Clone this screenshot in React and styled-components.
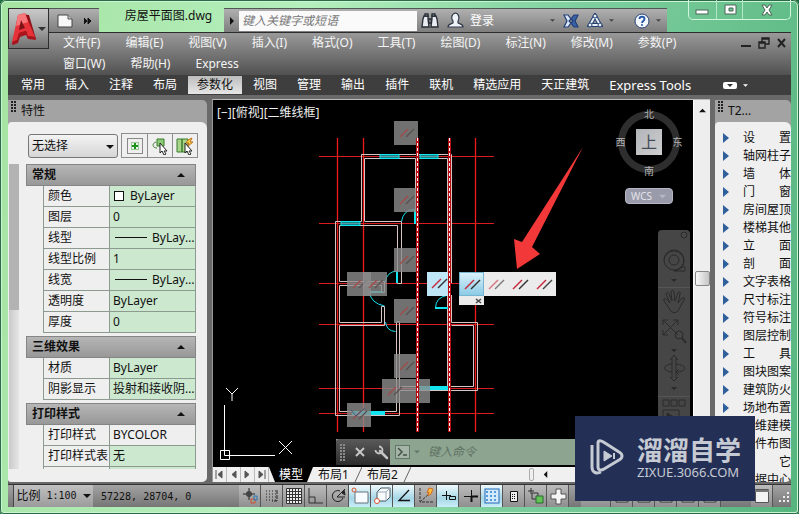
import React from 'react';
import styled, { createGlobalStyle, css } from 'styled-components';

const GlobalStyle = createGlobalStyle`
  * {
    box-sizing: border-box;
  }

  body {
    margin: 0;
    background: #1d6b3c;
    font-family: 'Noto Sans', 'Noto Sans CJK SC', sans-serif;
    font-size: 12px;
    line-height: 16px;
    color: #111;
  }

  button,
  input,
  select {
    font: inherit;
    color: inherit;
    border: 0;
    padding: 0;
    margin: 0;
    background: none;
  }

  ul {
    list-style: none;
    margin: 0;
    padding: 0;
  }

  svg {
    display: block;
    flex: none;
  }
`;

const Window = styled.div`
  position: relative;
  display: flex;
  flex-direction: column;
  height: 100vh;
  padding: 0 8px 7px;
  overflow: hidden;
  border-radius: 6px 6px 4px 4px;
  background: linear-gradient(100deg, #a5e3a2 0, #b4efbd 35%, #7fd0a0 65%, #56b57e 100%);
  box-shadow: inset 0 0 0 1px #2d6b48, inset 0 0 0 2px #c9f5d2;
`;

/* title bar */

const TitleBar = styled.header`
  display: flex;
  align-items: flex-end;
  height: 32px;
  padding-left: 41px;
  flex: none;
`;

const AppButton = styled.button`
  position: absolute;
  z-index: 2;
  left: 8px;
  top: 8px;
  display: flex;
  align-items: center;
  width: 41px;
  height: 41px;
  border: 1px solid #2e2e2e;
  background: linear-gradient(#c9c9c9, #a4a4a4 50%, #707070);
`;

const barGray = css`
  background: linear-gradient(#b0b0b0, #7e7e7e);
  border-top: 1px solid #4f5a52;
`;

const QuickAccess = styled.div`
  ${barGray}
  display: flex;
  align-items: center;
  gap: 10px;
  width: 50px;
  height: 24px;
  padding-left: 8px;
`;

const FileName = styled.div`
  width: 125px;
  height: 24px;
  padding-left: 14px;
  text-align: center;
`;

const InfoBar = styled.div`
  ${barGray}
  display: flex;
  align-items: center;
  flex: 1;
  height: 24px;
  padding-right: 6px;
  color: #fff;
`;

const InfoArrow = styled.button`
  display: flex;
  justify-content: center;
  width: 15px;
`;

const SearchInput = styled.input`
  width: 178px;
  height: 20px;
  padding-left: 3px;
  background: #fafafa;
  font-style: italic;

  &::placeholder {
    color: #777;
  }
`;

const InfoTools = styled.div`
  display: flex;
  align-items: center;
  gap: 8px;
  flex: 1;
  padding-left: 4px;
`;

const IconButton = styled.button`
  display: flex;
  align-items: center;
  justify-content: center;
  gap: 6px;
`;

const HelpButton = styled(IconButton)`
  margin-left: 12px;
`;

const Spacer = styled.span`
  flex: 1;
`;

const WindowControls = styled.div`
  display: flex;
  align-self: flex-start;
  width: 103px;
  height: 20px;
  margin-left: 21px;
  border: 1px solid #d2f5de;
  border-top: 0;
  border-radius: 0 0 5px 5px;
`;

const WindowControl = styled(IconButton)`
  width: ${({ $wide }) => ($wide ? '48px' : '27px')};

  & + & {
    border-left: 1px solid #b5e8c8;
  }
`;

/* menus */

const MenuArea = styled.div`
  display: flex;
  flex: none;
  height: 43px;
  padding-left: 55px;
  padding-right: 5px;
  border-top: 1px solid #2c2c2c;
  background: linear-gradient(#999, #515151);
  color: #f4f4f4;
`;

const Menu = styled.nav`
  display: flex;
  flex-wrap: wrap;
  align-content: flex-start;
  flex: 1;
  gap: 5px 25px;
  padding-top: 2px;
  padding-right: 20px;
`;

const MenuItem = styled.button`
  height: 16px;
`;

const DocControls = styled.div`
  display: flex;
  align-items: center;
  gap: 7px;
  height: 20px;
`;

const Ribbon = styled.nav`
  display: flex;
  align-items: center;
  flex: none;
  gap: 2px;
  height: 20px;
  padding-left: 4px;
  background: #3e3e3e;
  color: #fff;
`;

const RibbonTab = styled.button`
  height: 18px;
  padding: 0 9px;
  ${({ $active }) =>
    $active &&
    css`
      color: #111;
      background: linear-gradient(#bdbdbd, #e6e6e6);
    `}
  ${({ $latin }) =>
    $latin &&
    css`
      font-size: 13px;
    `}
`;

const RibbonToggle = styled(IconButton)`
  margin-left: 21px;
`;

/* work area */

const Body = styled.main`
  display: flex;
  flex: 1;
  min-height: 0;
  gap: 5px;
  padding: 5px 0 2px;
  background: #696969;
`;

const Palette = styled.section`
  display: flex;
  flex-direction: column;
  width: ${({ $width }) => $width};
  flex: none;
  min-height: 0;
  overflow: hidden;
  border-radius: 0 5px 5px 3px;
  background: #a3a3a3;
`;

const PaletteTitle = styled.h2`
  display: flex;
  align-items: center;
  gap: 5px;
  height: 22px;
  margin: 0;
  padding-left: 3px;
  flex: none;
  font-size: 12px;
  font-weight: 400;
`;

const Grip = styled.span`
  width: 5px;
  height: 12px;
  margin-bottom: 8px;
  background: radial-gradient(circle at 1px 1px, #222 1px, transparent 1px) 0 0 / 3px 3px;
`;

const PaletteBody = styled.div`
  display: flex;
  flex-direction: column;
  flex: 1;
  min-height: 0;
  overflow: hidden;
  border-radius: 4px 6px 0 0;
  background: #efefef;
`;

const PickRow = styled.div`
  display: flex;
  align-items: center;
  gap: 3px;
  padding: 11px 9px 6px 20px;
  flex: none;
`;

const SelectBox = styled.div`
  position: relative;
  flex: 1;

  svg {
    position: absolute;
    right: 4px;
    top: 9px;
    pointer-events: none;
  }
`;

const Select = styled.select`
  appearance: none;
  display: block;
  width: 100%;
  height: 24px;
  padding-left: 3px;
  border: 1px solid #777;
  border-radius: 3px;
  background: linear-gradient(#f3f3f3, #d6d6d6);
`;

const PickButtons = styled.div`
  display: flex;
  border: 1px solid #8d8d8d;
`;

const PickButton = styled(IconButton)`
  width: 25px;
  height: 23px;

  & + & {
    border-left: 1px solid #8d8d8d;
  }
`;

const Properties = styled.div`
  display: flex;
  gap: 7px;
  flex: 1;
  min-height: 0;
  padding: 0 11px 13px 1px;
`;

const PaletteScroll = styled.div`
  width: 10px;
  background: linear-gradient(90deg, #c9c9c9, #e6e6e6);

  &::before {
    content: '';
    display: block;
    height: 48%;
    background: #b3b3b3;
  }
`;

const Groups = styled.div`
  display: flex;
  flex-direction: column;
  flex: 1;
  min-width: 0;
  gap: 3px;
  overflow: hidden;
`;

const GroupTitle = styled.button`
  display: flex;
  align-items: center;
  justify-content: space-between;
  width: 100%;
  height: 22px;
  padding: 0 10px 0 5px;
  border: 1px solid #858585;
  background: linear-gradient(#b6b6b6, #989898);
  font-weight: 700;
`;

const PropTable = styled.table`
  width: calc(100% - 17px);
  margin-left: 17px;
  table-layout: fixed;
  border-collapse: separate;
  border-spacing: 0;
`;

const PropName = styled.th`
  width: 67px;
  height: 21px;
  padding: 0 0 0 4px;
  border: solid #8c9a8f;
  border-width: 0 1px 1px;
  font-weight: 400;
  text-align: left;
  white-space: nowrap;
`;

const PropValue = styled.td`
  padding: 0 0 0 3px;
  overflow: hidden;
  border: solid #8c9a8f;
  border-width: 0 1px 1px 0;
  background: ${({ $plain }) => ($plain ? '#efefef' : '#cce8cf')};
  text-overflow: ellipsis;
  white-space: nowrap;
`;

const Swatch = styled.span`
  display: inline-block;
  width: 10px;
  height: 10px;
  margin: 0 6px 0 1px;
  border: 1px solid #111;
  background: #fff;
  vertical-align: -1px;
`;

const LineSample = styled.span`
  display: inline-block;
  width: 32px;
  height: 1px;
  margin: 0 5px 0 2px;
  background: #111;
  vertical-align: 4px;
`;

/* drawing */

const Drawing = styled.section`
  display: flex;
  flex-direction: column;
  flex: 1;
  min-width: 0;
  margin-top: -1px;
  border-top: 1px solid #bbb;
  border-left: 1px solid #999;
`;

const DrawingTop = styled.div`
  display: flex;
  flex: 1;
  min-height: 0;
`;

const Canvas = styled.div`
  position: relative;
  flex: 1;
  overflow: hidden;
  background: #000;
`;

const ViewLabel = styled.div`
  position: absolute;
  left: 4px;
  top: 5px;
  color: #eee;
`;

const VerticalScroll = styled.div`
  display: flex;
  flex-direction: column;
  align-items: center;
  width: 17px;
  padding-top: 7px;
  border-left: 1px solid #fff;
  background: #eee;
`;

const ScrollThumb = styled.div`
  width: 15px;
  height: 15px;
  margin-top: 157px;
  border: 1px solid #888;
  border-radius: 2px;
  background: linear-gradient(90deg, #fafafa, #c4c4c4);
`;

const ViewCube = styled.div`
  position: absolute;
  right: 8px;
  top: 6px;
  display: grid;
  grid-template-columns: 15px 1fr 15px;
  grid-template-rows: 15px 1fr 15px;
  place-items: center;
  width: 72px;
  height: 72px;
  color: #b4b4b4;
  font-size: 10px;
  line-height: 12px;
`;

const CubeRing = styled.div`
  grid-area: 1 / 1 / 4 / 4;
  width: 62px;
  height: 62px;
  border: 7px solid #2e2e2e;
  border-radius: 50%;
`;

const Compass = styled.span`
  grid-area: ${({ $area }) => $area};
  z-index: 1;
`;

const CubeFace = styled.button`
  grid-area: 2 / 2;
  width: 26px;
  height: 26px;
  background: linear-gradient(135deg, #b2b4b8, #cfcfcf);
  color: #444c58;
  font-size: 16px;
  line-height: 24px;
`;

const Wcs = styled.button`
  position: absolute;
  right: 20px;
  top: 88px;
  display: flex;
  align-items: center;
  gap: 7px;
  width: 48px;
  height: 16px;
  padding-left: 5px;
  border: 1px solid #b6b7c4;
  border-radius: 4px;
  background: #9a9baa;
  color: #e2e3ea;
  font-size: 10px;
`;

const NavBar = styled.div`
  position: absolute;
  right: 3px;
  top: 130px;
  bottom: 0;
  width: 32px;
  border-radius: 4px 4px 0 0;
  background: #464646;
`;

const ConstraintBar = styled.div`
  position: absolute;
  left: 246px;
  top: 172px;
  display: grid;
  grid-template-columns: 25px 24px 24px 24px;
  background: linear-gradient(#ebebeb 24px, transparent 24px);
`;

const ConstraintButton = styled(IconButton)`
  height: 24px;
  ${({ $active }) =>
    $active &&
    css`
      border: 1px solid #78b5d0;
      background: linear-gradient(#d9f1fa, #8ccbe5);
    `}
`;

const ConstraintClose = styled(IconButton)`
  justify-content: flex-end;
  height: 9px;
  padding-right: 2px;
  background: #ebebeb;
`;

const CommandLine = styled.div`
  position: absolute;
  left: 123px;
  right: 0;
  bottom: 2px;
  display: flex;
  height: 26px;
  background: #8da590;
`;

const CommandTools = styled.div`
  display: flex;
  align-items: center;
  gap: 9px;
  width: 54px;
  padding-left: 4px;
  border-radius: 3px 0 0 0;
  background: linear-gradient(#5a5a5a, #2c2c2c);
`;

const CommandPrompt = styled(IconButton)`
  gap: 4px;
`;

const CommandInput = styled.input`
  flex: 1;
  min-width: 0;
  padding-left: 8px;
  font-style: italic;

  &::placeholder {
    color: #5f7163;
  }
`;

const LayoutTabs = styled.div`
  display: flex;
  flex: none;
  height: 15px;
  background: #f0f0f0;
`;

const TabNav = styled(IconButton)`
  width: 14px;
  border-right: 1px solid #bbb;
`;

const LayoutTab = styled.button`
  height: 15px;
  padding: 0 5px;
  line-height: 15px;
  ${({ $active }) =>
    $active &&
    css`
      padding: 0 10px;
      background: #000;
      color: #fff;
      clip-path: polygon(0 0, 100% 0, calc(100% - 6px) 100%, 6px 100%);
    `}
`;

const Splitter = styled.span`
  width: 5px;
  margin: 1px 8px 1px 0;
  border: 1px solid #aaa;
  border-radius: 2px;
`;

const HorizontalScroll = styled.div`
  display: flex;
  align-items: center;
  width: 168px;
`;

/* architecture palette */

const ToolList = styled.ul`
  padding-top: 7px;
`;

const ToolItem = styled.button`
  display: flex;
  align-items: center;
  gap: 14px;
  width: 100%;
  height: 18px;
  padding-left: 8px;
`;

const ToolName = styled.span`
  display: flex;
  justify-content: space-between;
  width: 48px;
`;

/* status bar */

const StatusBar = styled.footer`
  display: flex;
  flex: none;
  height: 23px;
  border-top: 1px solid #333;
  background: linear-gradient(#a3a3a3, #767676);
`;

const ScaleButton = styled(IconButton)`
  width: 80px;
  margin-left: 5px;
  border-left: 1px solid #444;
  background: linear-gradient(#c1c1c1, #9b9b9b);
  font-family: 'DejaVu Sans Mono', 'Noto Sans CJK SC', monospace;
  font-size: 10px;
`;

const ScaleLabel = styled.span`
  font-size: 12px;
`;

const Coordinates = styled.output`
  width: 146px;
  padding: 4px 0 0 8px;
  white-space: pre;
  font-family: 'DejaVu Sans Mono', monospace;
  font-size: 10px;
`;

const StatusToggle = styled(IconButton)`
  width: 22px;
  border-right: 1px solid #555;
  background: ${({ $on }) =>
    $on
      ? 'linear-gradient(#f0fafd, #a6d6e6 60%, #c9eef7)'
      : 'linear-gradient(#bcbcbc, #8f8f8f)'};
`;

const SpaceButton = styled.button`
  width: 30px;
  margin-left: 12px;
  border-right: 1px solid #555;
  background: linear-gradient(#bcbcbc, #8f8f8f);
`;

const Watermark = styled.aside`
  position: absolute;
  z-index: 3;
  right: 44px;
  bottom: 13px;
  display: flex;
  align-items: center;
  gap: 13px;
  width: 180px;
  height: 85px;
  padding: 0 0 4px 15px;
  background: #232f55;
  color: #c6cad3;
`;

const WatermarkName = styled.div`
  font-size: 26px;
  line-height: 30px;
  font-weight: 700;
`;

const WatermarkUrl = styled.div`
  font-size: 13px;
  line-height: 14px;
`;

const menus = [
  '文件(F)', '编辑(E)', '视图(V)', '插入(I)', '格式(O)', '工具(T)', '绘图(D)',
  '标注(N)', '修改(M)', '参数(P)', '窗口(W)', '帮助(H)', 'Express',
];

const ribbonTabs = [
  '常用', '插入', '注释', '布局', '参数化', '视图', '管理', '输出', '插件',
  '联机', '精选应用', '天正建筑', 'Express Tools',
];

const groups = [
  {
    title: '常规',
    rows: [
      { name: '颜色', value: 'ByLayer', swatch: true },
      { name: '图层', value: '0' },
      { name: '线型', value: 'ByLayer', line: true },
      { name: '线型比例', value: '1' },
      { name: '线宽', value: 'ByLayer', line: true },
      { name: '透明度', value: 'ByLayer' },
      { name: '厚度', value: '0' },
    ],
  },
  {
    title: '三维效果',
    rows: [
      { name: '材质', value: 'ByLayer' },
      { name: '阴影显示', value: '投射和接收阴影' },
    ],
  },
  {
    title: '打印样式',
    rows: [
      { name: '打印样式', value: 'BYCOLOR', plain: true },
      { name: '打印样式表', value: '无' },
      { name: '', value: '' },
    ],
  },
];

const tools = [
  '设置', '轴网柱子', '墙体', '门窗', '房间屋顶', '楼梯其他', '立面', '剖面',
  '文字表格', '尺寸标注', '符号标注', '图层控制', '工具', '图块图案',
  '建筑防火', '场地布置', '三维建模', '文件布图', '其它', '数据中心',
];

const Triangle = ({ dir = 'down', size = 6, color = '#111' }) => {
  const shapes = {
    down: '0,2 8,2 4,6',
    up: '0,6 8,6 4,2',
    left: '6,0 6,8 2,4',
    right: '2,0 2,8 6,4',
  };
  return (
    <svg width={size} height={size} viewBox='0 0 8 8'>
      <polygon points={shapes[dir]} fill={color} />
    </svg>
  );
};

const Parallel = ({ faded, accent = '#333' }) => (
  <svg width='18' height='12' viewBox='0 0 18 12' opacity={faded ? 0.6 : 1}>
    <path d='M2 11 11 2' stroke='#c8283c' strokeWidth='1.500' />
    <path d='M8 11 17 2' stroke={accent} strokeWidth='1.500' />
  </svg>
);

const AppLogo = () => (
  <svg width='29' height='38' viewBox='0 0 29 38'>
    <path d='M12 4 20 5 27 29 20 28 18 24 10 26 8 32 3 35Z' fill='#8f1218' />
    <path d='M9 5 16 3 26 27 19 26 17 21 10 23 8 30 3 32Z' fill='#e8323a' />
    <path d='M9 5 16 3 19 12 7 16Z' fill='#f7777a' />
    <path d='M12 10 16 18 10 20Z' fill='#7d1116' />
    <path d='M3 32 8 30 10 23 17 21 19 26 26 27 27 30 19 29 17 25 11 27 9 33 4 35Z' fill='#a8151c' />
  </svg>
);

const FileIcon = () => (
  <svg width='17' height='14' viewBox='0 0 17 14'>
    <path d='M1 1h10l4 4v8H1z' fill='#f8f8f8' stroke='#444' />
    <path d='M11 1v4h4' fill='#ccc' stroke='#555' />
  </svg>
);

const Binoculars = () => (
  <svg width='18' height='16' viewBox='0 0 18 16' fill='#e9edf2' stroke='#252a33' strokeWidth='1.3'>
    <path d='M3 3h4v3l1 8H1l1-8zM11 3h4l1 3 1 8h-7l1-8z' />
    <path d='M4 1h3v2H4zM11 1h3v2h-3zM8 6h2v4H8z' />
  </svg>
);

const Person = () => (
  <svg width='17' height='17' viewBox='0 0 17 17' fill='#f0f3f8' stroke='#2d3748' strokeWidth='1.2'>
    <path d='M1 15c0-3 3-3 5-4V9C4 7 4 2 8.500 1c4 1 4 6 2.500 8v2c2 1 5 1 5 4z' />
  </svg>
);

const Exchange = () => (
  <svg width='16' height='14' viewBox='0 0 16 14' fill='#dbe7f6' stroke='#213e78' strokeWidth='1.200'>
    <path d='M1 1h4l3 4-2 2 2 2-3 4H1l3-6z' />
    <path d='M15 1h-4L8 5l2 2-2 2 3 4h4l-3-6z' fill='#3b63a8' />
  </svg>
);

const Connect = () => (
  <svg width='16' height='15' viewBox='0 0 16 15' fill='none' stroke='#223d70'>
    <path d='M8 3 13 12H3z' strokeWidth='4' />
    <path d='M8 3 13 12H3z' stroke='#e8eff8' strokeWidth='2' />
    <circle cx='8' cy='3' r='2' fill='#e8eff8' />
    <circle cx='3' cy='12' r='2' fill='#e8eff8' />
    <circle cx='13' cy='12' r='2' fill='#e8eff8' />
  </svg>
);

const HelpIcon = () => (
  <svg width='16' height='16' viewBox='0 0 16 16'>
    <circle cx='8' cy='8' r='7' fill='#f4f8ff' stroke='#244176' />
    <path d='M5.500 6c0-3 5-3 5 0 0 2-2.500 2-2.500 4' fill='none' stroke='#2457a6' strokeWidth='1.800' />
    <circle cx='8' cy='12' r='1' fill='#2457a6' />
  </svg>
);

const CaptionIcon = ({ kind }) => (
  <svg width='14' height='12' viewBox='0 0 14 12' stroke='#4d6658' fill='#fff'>
    {kind === 'min' && <rect x='1' y='6' width='12' height='4' />}
    {kind === 'max' && <path d='M2 1h11v9H2zM6 4v3h4V4z' fillRule='evenodd' />}
    {kind === 'close' && (
      <path d='M2 1h3l2 3 2-3h3L9 6l3 5H9L7 8l-2 3H2l3-5z' />
    )}
  </svg>
);

const walls = [
  'M361.5 221.500V154.500H451.500V283M451.500 295V322.500H477.500V390.500H399.500',
  'M364.500 221V158.500H415.500V221M419.500 158.500H447.500V386.500',
  'M364.500 221.500H401.500V283.500H397.500V225.500H339.500V281.500H384.500V292.500H381.500V285.500H339.500V322.500H381.500V306.500H384.500V325.500H339.500V411.500H396.500V321.500H399.500V415.500H335.500V221.500H361.500',
  'M401 386.500H473.500V325.500H451.500',
];

const badges = [
  [394, 121, 24], [394, 188, 24], [394, 248, 24], [394, 299, 24], [394, 354, 24],
  [347, 272, 24], [363, 272, 24], [382, 379, 48], [347, 403, 24],
];

const FloorPlan = () => (
  <svg width='478' height='367' viewBox='213 100 478 367' fill='none'>
    <g stroke='#d81c20'>
      {[156.5, 223.5, 283.5, 324.5, 388.5, 413.5].map((y) => (
        <path key={y} d={`M319 ${y}H494`} />
      ))}
    </g>
    <g stroke='#f01a1e' strokeWidth='1.300'>
      {[337.5, 363.5, 475.5].map((x) => (
        <path key={x} d={`M${x} 138V432`} />
      ))}
    </g>
    <g stroke='#d8c4c0'>
      {walls.map((d) => (
        <path key={d} d={d} />
      ))}
    </g>
    <g stroke='#12e4f0'>
      <path
        d='M380 154.500h19v4h-19zM420 154.500h18v4h-18zM341 221.500h19v4h-19z'
        fill='#12e4f0'
        fillOpacity='0.6'
      />
      <path d='M352 413h33M420 388h28' strokeWidth='4' />
      <path d='M415 210v14M397 271v12M369 292h14M435 308h14' strokeWidth='2' />
      <path d='M401.500 221.500q2-12 13-12M385.500 282q1-10 11-11M369.500 292q1 11 15 14M385.500 322q1 9 10 9.500M435.500 308q0-11 13-13' />
    </g>
    {badges.map(([x, y, w]) => (
      <g key={`${x}-${y}`}>
        <rect x={x} y={y} width={w} height='24' fill='#8d8d8d' fillOpacity='0.8' />
        <path d={`M${x + 6} ${y + 16}l8-8`} stroke='#a14a4a' strokeWidth='1.200' />
        <path d={`M${x + 12} ${y + 16}l8-8`} stroke='#5a5050' strokeWidth='1.200' />
      </g>
    ))}
    <path d='M351 410l5 6 9-8' stroke='#457' />
    <rect x='427' y='272' width='21' height='24' fill='#bfe6f6' />
    <path d='M432 288l9-9' stroke='#c8283c' strokeWidth='1.500' />
    <path d='M438 288l9-9' stroke='#333' strokeWidth='1.500' />
    {[417.5, 449.5].map((x) => (
      <g key={x}>
        <path d={`M${x} 138V432`} stroke='#b80f16' strokeWidth='3' />
        <path d={`M${x} 138V432`} stroke='#fff' strokeDasharray='3 2' />
      </g>
    ))}
    <polygon points='583,147 532,247 540,254 517,269 514,239 522,242' fill='#f23838' />
    <g stroke='#fff'>
      <path d='M224.500 405V455.500H275M220.500 450.500h9v9h-9z' />
      <path d='M226 388l6 6 6-6M232 394v7M279 441l13 13M292 441l-13 13' />
    </g>
  </svg>
);

const NavIcons = () => (
  <svg width='32' height='237' viewBox='0 0 32 237' fill='none' stroke='#2a2a2a'>
    <circle cx='26' cy='5' r='3' />
    <path d='M6 30a10 10 0 1 1 10 11h11v-4h-4' />
    <circle cx='16' cy='30' r='10' />
    <circle cx='16' cy='30' r='5' />
    <path d='M0 57.500h32M0 166.500h32' stroke='#555' />
    <path d='M11 78 6 71c-1-3 2-3 3-1l3 3-4-9c0-2 2-2 3 0l3 7-1-9c0-2 3-2 3 0l1 9 3-8c1-2 3-1 2 1l-2 9 4-5c2-1 3 0 2 2l-5 9c-2 5-8 5-10-1z' />
    <path d='M5 90l15 15M20 90 5 105M5 95v-5h5M15 90h5v5M5 100v5h5' />
    <circle cx='21' cy='105' r='4' />
    <path d='M24 108l4 5' strokeWidth='2' />
    <path d='M14 128v20M18 128v20M12 130l4-5 4 5M12 147l4 4 4-4' />
    <path d='M14 134c-10 1-10 7 0 8M18 134c12 1 11 8 0 8M21 139l-3 3 3 3' />
    <path d='M5 170h6v6H5zM13 170h6v6h-6zM21 170h6v6h-6zM5 180h16v14H5z' />
    <path d='M9 183l7 4-7 4z' fill='#2a2a2a' />
    <g fill='#2a2a2a' stroke='none'>
      <path d='M13 49h6l-3 3zM13 119h6l-3 3zM13 157h6l-3 3z' />
    </g>
  </svg>
);

const PickIcon = ({ kind }) => (
  <svg width='18' height='18' viewBox='0 0 18 18' fill='none'>
    {kind === 0 && (
      <>
        <rect x='1.5' y='1.5' width='15' height='15' stroke='#222' strokeDasharray='1 1' />
        <rect x='5.5' y='5.500' width='7' height='7' stroke='#35a035' strokeDasharray='1 1' />
        <path d='M9 6v6M6 9h6' stroke='#1c941c' strokeWidth='2' />
      </>
    )}
    {kind > 0 && (
      <>
        {kind === 1 ? (
          <>
            <path d='M6 2h7v7H6z' fill='#8bcb75' stroke='#3a7b2d' />
            <path d='M5 5C1 6 1 11 6 11' stroke='#3a7b2d' />
          </>
        ) : (
          <>
            <path d='M1 2h5v13H1zM6 2h6v13H6z' fill='#a8d58a' stroke='#3a7b2d' />
            <path d='M12 3l4-2-2 4h3l-6 5 2-4h-3z' fill='#ffd64a' stroke='#c1701a' />
          </>
        )}
        <path d='M9 6v10l2-2 2 4 2-1-2-3h3z' fill='#fff' stroke='#222' />
      </>
    )}
  </svg>
);

const TabNavIcon = ({ dir, end }) => (
  <svg width='9' height='9' viewBox='0 0 9 9' fill='#555' stroke='#555'>
    <path d={dir === 'left' ? 'M7 1v7L3 4.500z' : 'M2 1v7l4-3.500z'} />
    {end && <path d={dir === 'left' ? 'M1 0v9' : 'M8 0v9'} />}
  </svg>
);

const Slash = () => (
  <svg width='8' height='15' viewBox='0 0 8 15'>
    <path d='M8 0 1 15' stroke='#666' />
  </svg>
);

const statusIcons = [
  <g key='infer'><path d='M8 1v12M2 7h12' stroke='#222' /><path d='M6 5h4v4H6z' stroke='#222' /><path d='M10 12h4v4h-4z' stroke='#d2502c' /><path d='M13 9h3v4h-3z' stroke='#2878b8' /></g>,
  <g key='snap'><path d='M3 4h10M3 7h10M3 10h10M3 13h10' stroke='#222' strokeDasharray='1 2' /><path d='M14 3v11H9' stroke='#222' strokeDasharray='4 1' /></g>,
  <path key='grid' d='M1.500 1.500h15v15h-15zM4.500 1v16M7.500 1v16M10.500 1v16M13.500 1v16M1 4.500h16M1 7.500h16M1 10.500h16M1 13.500h16' fill='#eee' stroke='#333' />,
  <path key='ortho' d='M2 1v15h14M2 10h6v6' stroke='#333' />,
  <g key='polar' stroke='#222'><path d='M14 11a5.500 5.500 0 1 1-3-7M8 10h8M8 10l8-8' /><path d='M13 6l3 2-1-5z' fill='#222' /></g>,
  <g key='osnap'><path d='M4 5h13v11H4z' fill='#f8fbfd' stroke='#64747c' /><circle cx='3' cy='3' r='2' stroke='#dd542f' /></g>,
  <g key='3dosnap'><path d='M4 5l4-4h9v9l-4 4H4z' fill='#f8fbfd' stroke='#44545c' /><path d='M4 5h9v9M13 5l4-4' stroke='#9ab' /><circle cx='4' cy='14' r='2.500' fill='#fff' stroke='#dd542f' /></g>,
  <path key='otrack' d='M14 3 4 13.500h11' stroke='#111' strokeWidth='1.300' />,
  <g key='ducs'><path d='M3 1v14h14M3 15 13 6' stroke='#333' strokeDasharray='3 1' /><path d='M12 1l4 1-2 5-3 2 1-4-2 1z' fill='#ffbd3b' stroke='#d06f23' /></g>,
  <path key='dyn' d='M7.500 4v9M3 8.500h9M10.500 9.500h6v3h-6z' stroke='#111' />,
  <g key='lwt' stroke='#111'><path d='M10.500 3v12M3 9.500h8' /><path d='M10 9.500h7M10.500 9v6' strokeWidth='2' /></g>,
  <g key='tpy'><rect x='2' y='2' width='14' height='14' fill='#d3eafb' stroke='#2469b5' /><path d='M3 5h12M3 9h12M3 13h12' stroke='#539bdb' strokeWidth='2' strokeDasharray='2 2' /></g>,
  <g key='qp'><path d='M5.500 4.500h7v10h-7z' fill='#eee' stroke='#111' /><path d='M7 7.500h4M7 9.500h4M7 11.500h4' stroke='#111' strokeDasharray='1 1' /></g>,
  <g key='sc'><path d='M4 1v6M1 4h6M5 6h6v6H5z' stroke='#333' /><path d='M9 9h7v7H9z' fill='#62c258' stroke='#276b2d' /></g>,
  <path key='am' d='M7 2h5v5h5v5h-5v5H7v-5H2V7h5z' fill='#f5f5f5' stroke='#555' />,
];

const onToggles = [5, 6, 7, 9, 11];

const viewTools = ['快速查看布局', '快速查看图形', '注释比例', '注释可见性', '工作空间'];

function StatusIcon({ children }) {
  return (
    <svg width='18' height='18' viewBox='0 0 18 18' fill='none'>
      {children}
    </svg>
  );
}

function TitleSection() {
  return (
    <TitleBar>
      <AppButton aria-label='应用程序菜单'>
        <AppLogo />
        <Triangle size={8} color='#333' />
      </AppButton>
      <QuickAccess>
        <IconButton aria-label='新建'>
          <FileIcon />
        </IconButton>
        <IconButton aria-label='更多'>
          <svg width='8' height='6' viewBox='0 0 8 6'>
            <path d='M0 0l3 3-3 3zM4 0l3 3-3 3z' fill='#111' stroke='#111' />
          </svg>
        </IconButton>
      </QuickAccess>
      <FileName>房屋平面图.dwg</FileName>
      <InfoBar>
        <InfoArrow aria-label='展开'>
          <Triangle dir='right' size={8} />
        </InfoArrow>
        <SearchInput aria-label='搜索' placeholder='键入关键字或短语' />
        <InfoTools>
          <IconButton aria-label='查找'>
            <Binoculars />
          </IconButton>
          <IconButton>
            <Person />
            登录
          </IconButton>
          <Spacer />
          <Triangle size={5} color='#444' />
          <IconButton aria-label='Exchange'>
            <Exchange />
          </IconButton>
          <IconButton aria-label='连接'>
            <Connect />
            <Triangle size={5} color='#444' />
          </IconButton>
          <HelpButton aria-label='帮助'>
            <HelpIcon />
            <Triangle size={5} color='#444' />
          </HelpButton>
        </InfoTools>
      </InfoBar>
      <WindowControls>
        <WindowControl aria-label='最小化'>
          <CaptionIcon kind='min' />
        </WindowControl>
        <WindowControl aria-label='最大化'>
          <CaptionIcon kind='max' />
        </WindowControl>
        <WindowControl $wide aria-label='关闭'>
          <CaptionIcon kind='close' />
        </WindowControl>
      </WindowControls>
    </TitleBar>
  );
}

function PropertyPalette() {
  return (
    <Palette $width='199px'>
      <PaletteTitle>
        <Grip />
        特性
      </PaletteTitle>
      <PaletteBody>
        <PickRow>
          <SelectBox>
            <Select aria-label='选择对象'>
              <option>无选择</option>
            </Select>
            <Triangle size={8} />
          </SelectBox>
          <PickButtons>
            {['切换', '选择对象', '快速选择'].map((name, i) => (
              <PickButton key={name} aria-label={name}>
                <PickIcon kind={i} />
              </PickButton>
            ))}
          </PickButtons>
        </PickRow>
        <Properties>
          <PaletteScroll />
          <Groups>
            {groups.map((group) => (
              <div key={group.title}>
                <GroupTitle>
                  {group.title}
                  <Triangle dir='up' size={8} />
                </GroupTitle>
                <PropTable>
                  <tbody>
                    {group.rows.map((row) => (
                      <tr key={row.name}>
                        <PropName scope='row'>{row.name}</PropName>
                        <PropValue $plain={row.plain}>
                          {row.swatch && <Swatch />}
                          {row.line && <LineSample />}
                          {row.value}
                        </PropValue>
                      </tr>
                    ))}
                  </tbody>
                </PropTable>
              </div>
            ))}
          </Groups>
        </Properties>
      </PaletteBody>
    </Palette>
  );
}

function DrawingArea() {
  return (
    <Drawing>
      <DrawingTop>
        <Canvas>
          <FloorPlan />
          <ViewLabel>[−][俯视][二维线框]</ViewLabel>
          <ConstraintBar>
            <ConstraintButton $active aria-label='平行'>
              <Parallel />
            </ConstraintButton>
            <ConstraintButton aria-label='平行'>
              <Parallel faded />
            </ConstraintButton>
            <ConstraintButton aria-label='平行'>
              <Parallel />
            </ConstraintButton>
            <ConstraintButton aria-label='平行'>
              <Parallel accent='#444' />
            </ConstraintButton>
            <ConstraintClose aria-label='隐藏'>
              <svg width='7' height='6' viewBox='0 0 7 6'>
                <path d='M1 1l5 4M6 1 1 5' stroke='#444' strokeWidth='1.500' />
              </svg>
            </ConstraintClose>
          </ConstraintBar>
          <ViewCube>
            <CubeRing />
            <Compass $area='1 / 2'>北</Compass>
            <Compass $area='2 / 1'>西</Compass>
            <CubeFace>上</CubeFace>
            <Compass $area='2 / 3'>东</Compass>
            <Compass $area='3 / 2'>南</Compass>
          </ViewCube>
          <Wcs>
            WCS
            <Triangle size={7} color='#b7b8c6' />
          </Wcs>
          <NavBar>
            <NavIcons />
          </NavBar>
          <CommandLine>
            <CommandTools>
              <svg width='6' height='17' viewBox='0 0 6 17'>
                <path d='M1 0v17M4 0v17' stroke='#8a8a8a' strokeWidth='2' strokeDasharray='2 1' />
              </svg>
              <svg width='10' height='10' viewBox='0 0 10 10'>
                <path d='M1 1l8 8M9 1l-8 8' stroke='#c5c5c5' strokeWidth='2' />
              </svg>
              <svg width='15' height='15' viewBox='0 0 15 15' fill='none' stroke='#c5c5c5'>
                <path d='M6 6l7 7' strokeWidth='2.500' strokeLinecap='round' />
                <path d='M5 1.500a3.500 3.500 0 1 1-3.500 3.500' strokeWidth='1.800' />
              </svg>
            </CommandTools>
            <CommandPrompt aria-label='最近命令'>
              <svg width='20' height='14' viewBox='0 0 20 14' fill='none'>
                <rect x='5.500' y='0.500' width='14' height='13' fill='#a4b5a7' stroke='#63766a' />
                <path d='M8 3l4 4-4 4M13 10h4' stroke='#465049' strokeWidth='1.500' />
              </svg>
              <Triangle size={6} color='#62766a' />
            </CommandPrompt>
            <CommandInput aria-label='命令' placeholder='键入命令' />
          </CommandLine>
        </Canvas>
        <VerticalScroll>
          <Triangle dir='up' size={7} />
          <ScrollThumb />
        </VerticalScroll>
      </DrawingTop>
      <LayoutTabs>
        {['left', 'left', 'right', 'right'].map((dir, i) => (
          <TabNav key={i} aria-label={dir}>
            <TabNavIcon dir={dir} end={i === 0 || i === 3} />
          </TabNav>
        ))}
        <LayoutTab $active>模型</LayoutTab>
        <LayoutTab>布局1</LayoutTab>
        <Slash />
        <LayoutTab>布局2</LayoutTab>
        <Slash />
        <Spacer />
        <Splitter />
        <HorizontalScroll>
          <Triangle dir='left' size={7} />
        </HorizontalScroll>
      </LayoutTabs>
    </Drawing>
  );
}

function App() {
  return (
    <>
      <GlobalStyle />
      <Window>
        <TitleSection />
        <MenuArea>
          <Menu>
            {menus.map((name) => (
              <MenuItem key={name}>{name}</MenuItem>
            ))}
          </Menu>
          <DocControls>
            <IconButton aria-label='最小化文档'>
              <svg width='10' height='12' viewBox='0 0 10 12'>
                <path d='M0 9h10' stroke='#222' strokeWidth='2' />
              </svg>
            </IconButton>
            <IconButton aria-label='还原文档'>
              <svg width='12' height='12' viewBox='0 0 12 12' fill='none' stroke='#222'>
                <path d='M1 5h6v6H1zM4 5V1h7v6H7M4 2h7M1 6h6' strokeWidth='1.400' />
              </svg>
            </IconButton>
            <IconButton aria-label='关闭文档'>
              <svg width='9' height='12' viewBox='0 0 9 12'>
                <path d='M1 2l7 8M8 2l-7 8' stroke='#222' strokeWidth='2' />
              </svg>
            </IconButton>
          </DocControls>
        </MenuArea>
        <Ribbon>
          {ribbonTabs.map((name) => (
            <RibbonTab
              key={name}
              $active={name === '参数化'}
              $latin={name === 'Express Tools'}
            >
              {name}
            </RibbonTab>
          ))}
          <RibbonToggle aria-label='最小化功能区'>
            <svg width='14' height='7' viewBox='0 0 14 7'>
              <rect width='14' height='7' rx='2' fill='#fff' />
              <path d='M4 2h6L7 5z' fill='#333' />
            </svg>
            <Triangle size={5} color='#fff' />
          </RibbonToggle>
        </Ribbon>
        <Body>
          <PropertyPalette />
          <DrawingArea />
          <Palette $width='76px'>
            <PaletteTitle>
              <Grip />
              T2...
            </PaletteTitle>
            <PaletteBody>
              <ToolList>
                {tools.map((name) => (
                  <li key={name}>
                    <ToolItem>
                      <svg width='6' height='10' viewBox='0 0 6 10'>
                        <path d='M0 0l6 5-6 5z' fill='#2f609b' />
                      </svg>
                      <ToolName>
                        {name.split('').map((char) => (
                          <span key={char}>{char}</span>
                        ))}
                      </ToolName>
                    </ToolItem>
                  </li>
                ))}
              </ToolList>
            </PaletteBody>
          </Palette>
        </Body>
        <StatusBar>
          <ScaleButton>
            <ScaleLabel>比例</ScaleLabel>
            1:100
            <Triangle size={8} />
          </ScaleButton>
          <Coordinates>57228, 28704, 0</Coordinates>
          {statusIcons.map((icon, i) => (
            <StatusToggle key={icon.key} $on={onToggles.includes(i)} aria-label={icon.key}>
              <StatusIcon>{icon}</StatusIcon>
            </StatusToggle>
          ))}
          <SpaceButton>模型</SpaceButton>
          {viewTools.map((name) => (
            <StatusToggle key={name} aria-label={name}>
              <StatusIcon>
                <path d='M3 4h12v11H3z' fill='#ccc' stroke='#333' />
              </StatusIcon>
            </StatusToggle>
          ))}
          <Spacer />
          <StatusToggle aria-label='全屏显示'>
            <StatusIcon>
              <path d='M2.500 2.500h13v13h-13z' fill='#f3f3f3' stroke='#555' />
              <path d='M2 4h14' stroke='#777' strokeWidth='2' />
            </StatusIcon>
          </StatusToggle>
          <StatusIcon>
            <path d='M14 8h2M10 12h6M6 16h10' stroke='#eee' strokeWidth='2' strokeDasharray='2 2' />
          </StatusIcon>
        </StatusBar>
        <Watermark>
          <svg width='34' height='36' viewBox='0 0 34 36' fill='none' stroke='#c6cad3' strokeLinejoin='round'>
            <path d='M8 4v24c0 3 3 4 6 2l15-9c4-2 4-6 0-8L15 4C11 1 8 1 8 4z' strokeWidth='3' />
            <path d='M2 6v22c0 6 5 7 9 5' strokeWidth='3' />
            <path d='M14 12l8 5-8 5z' fill='#c6cad3' />
            <path d='M24 14v6' strokeWidth='2' />
          </svg>
          <div>
            <WatermarkName>溜溜自学</WatermarkName>
            <WatermarkUrl>ZIXUE.3066.COM</WatermarkUrl>
          </div>
        </Watermark>
      </Window>
    </>
  );
}

export default App;
